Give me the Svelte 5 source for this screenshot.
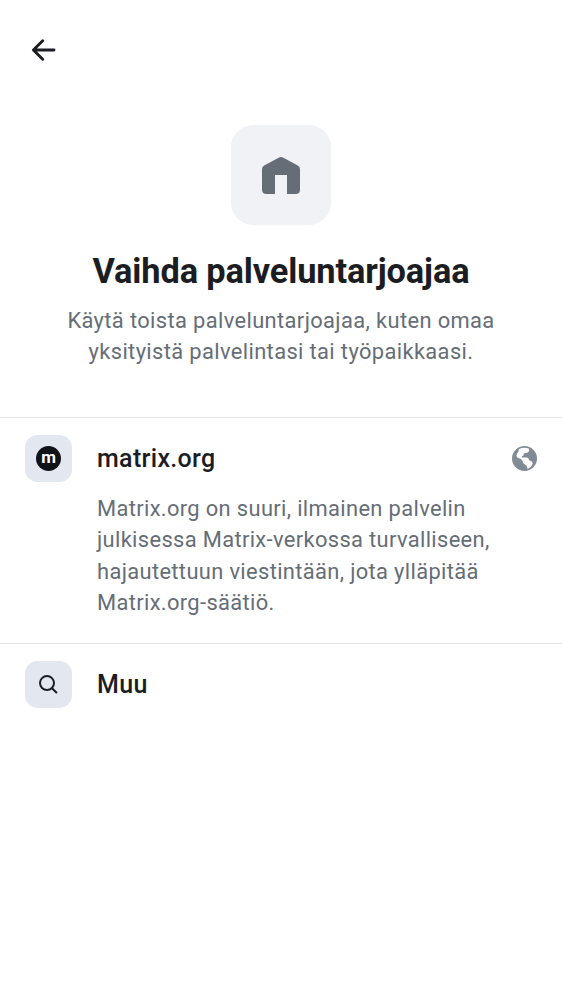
<script>
  const description = [
    'Matrix.org on suuri, ilmainen palvelin',
    'julkisessa Matrix-verkossa turvalliseen,',
    'hajautettuun viestintään, jota ylläpitää',
    'Matrix.org-säätiö.'
  ];
</script>

<main>
  <nav>
    <button class="back" aria-label="Takaisin">
      <svg width="25" height="26" viewBox="0 0 25 26" fill="none" stroke="currentColor" stroke-width="2.9" stroke-linecap="round" stroke-linejoin="round"><path d="M23 13H2.8M11.7 3.7L2.4 13L11.7 22.3" /></svg>
    </button>
  </nav>
  <header>
    <div class="hero">
      <svg width="38" height="37" viewBox="0 0 38 37"><path fill="#656d77" d="M0 12.3Q0 9.8 2.2 8.5L16.6.7Q19 -.7 21.4.7L35.8 8.5Q38 9.8 38 12.3V32.5Q38 37 33.5 37H25V18H13V37H4.5Q0 37 0 32.5Z" /></svg>
    </div>
    <h1>Vaihda palveluntarjoajaa</h1>
    <p>Käytä toista palveluntarjoajaa, kuten omaa<br />yksityistä palvelintasi tai työpaikkaasi.</p>
  </header>

  <section>
    <div class="row">
      <span class="tile"><span class="avatar">m</span></span>
      <h2>matrix.org</h2>
      <svg class="globe" width="25" height="25" viewBox="0 0 25 25">
        <circle cx="12.5" cy="12.5" r="12.5" fill="#818a95" />
        <path fill="#fff" d="M6.8 3.2Q11.5.7 16.8 2.4Q17.8 4.5 16.4 6Q15.4 6.8 13.2 7.1Q11.5 7.3 11.6 9Q11.4 9.9 9.9 9.9V11.4H14.5Q16.9 11.5 17 14.3Q19.9 14.6 20.7 17.1Q20.5 19 19 20.7Q17.6 22.2 15.4 22.8Q15.3 19.4 13.2 18.7Q10.6 17.9 10.4 14.7Q9.2 12.5 6.7 12.2Q4.6 11.6 4.5 9.8Q4.6 7.8 6 6.2Q6.9 5.2 6.8 3.2Z" />
      </svg>
    </div>
    <p class="description">{#each description as line}<span>{line}</span>{/each}</p>
  </section>
  <section class="other">
    <div class="row">
      <span class="tile">
        <svg width="20" height="20" viewBox="0 0 20 20" fill="none" stroke="#1b1d22" stroke-width="2" stroke-linecap="round"><circle cx="8" cy="8.1" r="7" /><path d="M13 13.2L17.4 17.5" /></svg>
      </span>
      <h2>Muu</h2>
    </div>
  </section>
</main>

<style>
  :global(body) { margin: 0; background: #fff; }
  main { min-height: 1000px; box-sizing: border-box; background: #fff; color: #1b1d22; font-family: Roboto, sans-serif; overflow: hidden; }
  nav { height: 100px; display: flex; align-items: center; padding-left: 31px; }
  .back { padding: 0; border: 0; background: none; color: inherit; display: flex; }
  header { height: 317px; box-sizing: border-box; padding-top: 25px; display: flex; flex-direction: column; align-items: center; text-align: center; }
  .hero { width: 100px; height: 100px; border-radius: 22px; background: #f0f2f5; display: flex; align-items: center; justify-content: center; }
  h1, h2, p { margin: 0; }
  h1 { margin-top: 25px; font-size: 34.375px; line-height: 43px; font-weight: 700; letter-spacing: -.12px; white-space: nowrap; }
  p { font-size: 21.875px; line-height: 31.25px; letter-spacing: .38px; color: #656d77; white-space: nowrap; }
  header p { margin-top: 12px; }
  section { height: 226px; box-sizing: border-box; border-top: 1px solid #e1e3e8; padding: 17.4px 25px 0; }
  .row { display: flex; align-items: center; height: 47px; }
  .tile { width: 47px; height: 47px; border-radius: 12.5px; background: #e3e8f0; display: flex; align-items: center; justify-content: center; }
  .avatar { width: 25px; height: 25px; border-radius: 50%; background: #101317; color: #fff; font-size: 17px; line-height: 22px; font-weight: 700; text-align: center; }
  h2 { margin-left: 25px; font-size: 25px; line-height: 37px; font-weight: 500; letter-spacing: .32px; }
  .globe { margin-left: auto; }
  .description { margin: 10.7px 0 0 72px; letter-spacing: .36px; }
  .description span { display: block; }
  .other { height: 90px; }
</style>
